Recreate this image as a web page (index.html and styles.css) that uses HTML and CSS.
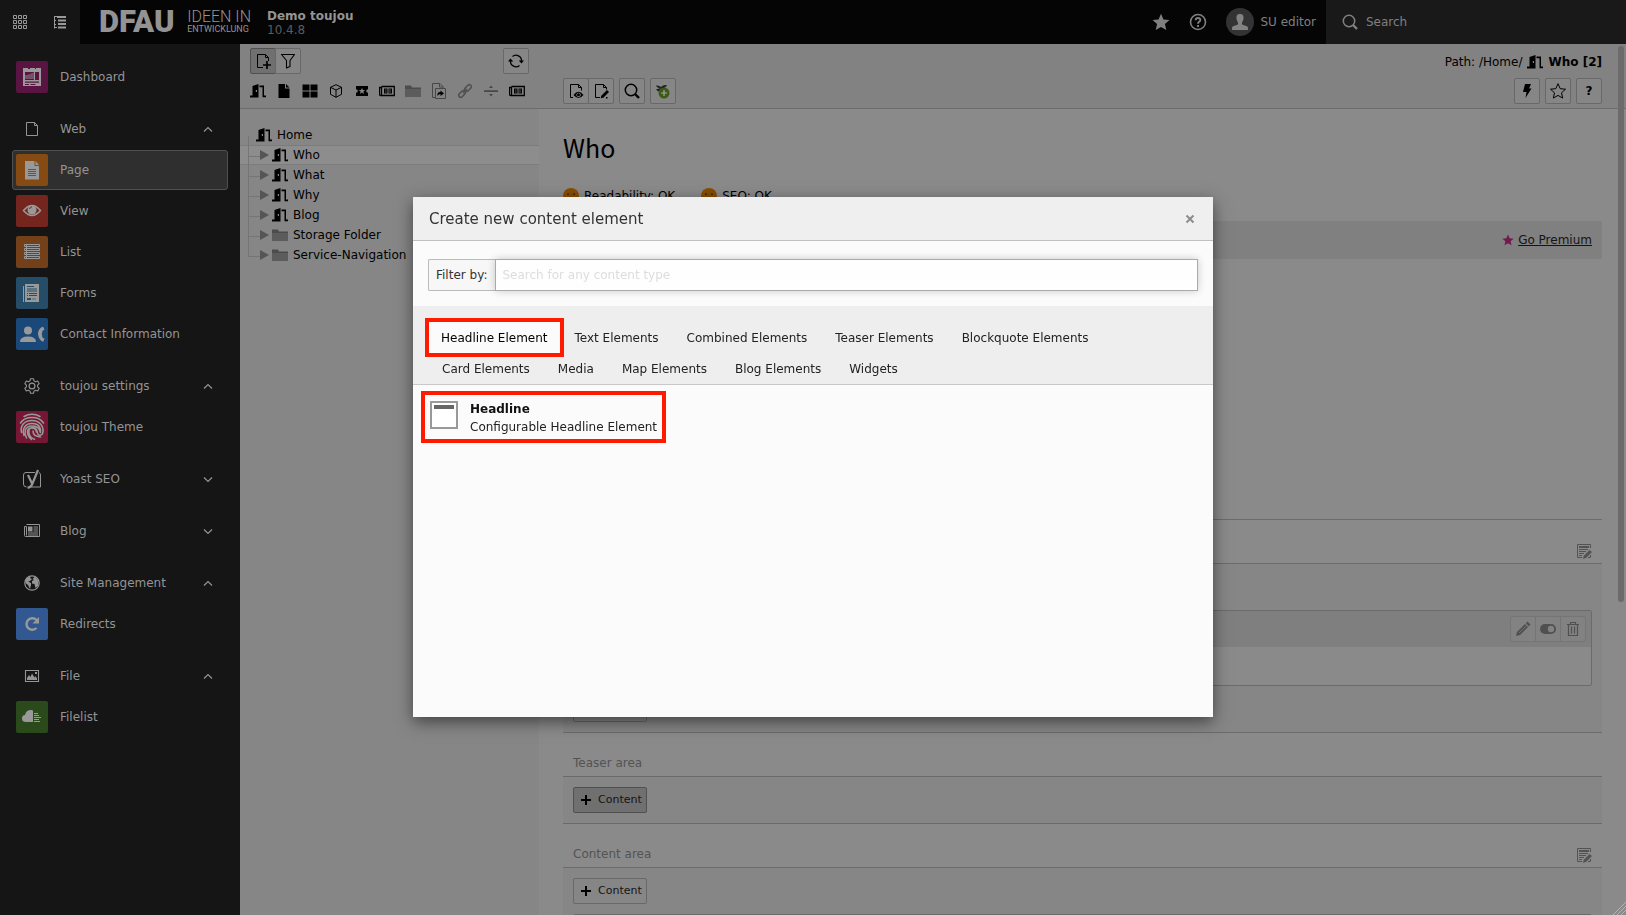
FILE: index.html
```html
<!DOCTYPE html>
<html lang="en">
<head>
<meta charset="utf-8">
<title>Demo toujou</title>
<link rel="stylesheet" href="styles.css">
</head>
<body>
<svg class="defs" aria-hidden="true">
  <symbol id="door" viewBox="0 0 16 16"><path fill="currentColor" d="M0 12.500h2.500V3l6-2v13.500H0zM9.500 2.500H14v10h2v1.800h-3.500V4.200h-3z"/><rect x="5.800" y="7" width="1.200" height="2" fill="#858585"/></symbol>
  <symbol id="page" viewBox="0 0 16 16"><path fill="currentColor" d="M2.500 1H9v4.500h4.500V15h-11zM10 1l3.500 3.500H10z"/></symbol>
  <symbol id="pageline" viewBox="0 0 16 16"><path fill="none" stroke="currentColor" d="M2.500 1.500h8l3 3v10h-11zM10.500 1.500v3h3"/></symbol>
  <symbol id="grid4" viewBox="0 0 16 16"><path fill="currentColor" d="M.5 1.500h7v6h-7zM8.500 1.500h7v6h-7zM.5 8.500h7v6h-7zM8.500 8.500h7v6h-7z"/></symbol>
  <symbol id="cube" viewBox="0 0 16 16"><path fill="none" stroke="currentColor" stroke-linejoin="round" d="M8 1.700l5.500 2.600v7L8 14.300l-5.500-3v-7zM2.500 4.300L8 7l5.500-2.700M8 7v7.300"/></symbol>
  <symbol id="ticket" viewBox="0 0 16 16"><path fill="currentColor" d="M2 3h12v3.200a1.800 1.800 0 0 0 0 3.600V13H2V9.800a1.800 1.800 0 0 0 0-3.600z"/><path fill="#858585" d="M8 4.800L8.900 7h2.300L9.400 8.500l.7 2.400L8 9.600l-2.100 1.300.7-2.400L4.800 7h2.300z"/></symbol>
  <symbol id="news" viewBox="0 0 16 16"><path fill="none" stroke="currentColor" stroke-width="1.300" d="M2.500 3.500h12.800v9H1.500q-1 0-1-1v-7h2v8"/><path fill="currentColor" d="M5 5.500h3.500v5H5zM9.500 5.500H13v5H9.500z"/><path stroke="#828282" stroke-width=".7" d="M6 7h1.500M6 9h1.500M11 6v4"/></symbol>
  <symbol id="folder" viewBox="0 0 16 16"><path fill="#4c4c4c" d="M0 2.500h6l1 2h9V7H0z"/><path fill="#5c5c5c" d="M0 6h16v8H0z"/></symbol>
  <symbol id="shortcut" viewBox="0 0 16 16"><path fill="none" stroke="#484848" d="M4.500 14.500h-3V.5H9l3 3v2M8.500.5v3.500H12M4.500 5.500h10v10h-10z"/><path fill="#000" d="M6.500 13v-2q0-2 3-2V7.500l3.500 3-3.500 2.500v-2q-2 0-3 2z"/></symbol>
  <symbol id="link" viewBox="0 0 16 16"><g fill="none" stroke="#505050" stroke-width="1.500"><rect x="-3.800" y="-2" width="7.600" height="4" rx="2" transform="translate(11 5) rotate(-45)"/><rect x="-3.800" y="-2" width="7.600" height="4" rx="2" transform="translate(5 11) rotate(-45)"/><path d="M6 10l4-4"/></g></symbol>
  <symbol id="divider" viewBox="0 0 16 16"><path fill="#484848" d="M1 7.300h14v1.600H1zM8 2.500L10 5H6zM8 13.500L10 11H6z"/></symbol>
  <symbol id="newpage" viewBox="0 0 16 16"><path fill="none" stroke="currentColor" d="M8 14.500H2.500v-13h8l3 3V8M10.500 1.500v3h3"/><path stroke="currentColor" stroke-width="1.700" d="M12 8v8M8 12h8"/></symbol>
  <symbol id="funnel" viewBox="0 0 16 16"><path fill="none" stroke="currentColor" stroke-width="1.100" stroke-linejoin="round" d="M1.500 1.500h13L10 7.500v6L6.500 15V7.500z"/></symbol>
  <symbol id="refresh" viewBox="0 0 16 16"><path fill="none" stroke="currentColor" stroke-width="1.300" d="M4.500 3.500A5.500 5.500 0 0 1 13.500 8M11.500 12.500A5.500 5.500 0 0 1 2.500 8"/><path fill="currentColor" d="M10.700 7.500H16L13.500 10.500zM0 8.500L2.500 5.500 5.300 8.500z"/></symbol>
  <symbol id="viewpage" viewBox="0 0 16 16"><path fill="none" stroke="currentColor" d="M5 14.500H2.500v-13h8l3 3v3M10.500 1.500v3h3"/><path fill="currentColor" fill-rule="evenodd" d="M5.500 12q5-6.500 10 0-5 6-10 0zM10.500 9.800a2.200 2.200 0 1 0 .1 0z"/><circle cx="10.500" cy="11.700" r="1.500" fill="currentColor"/></symbol>
  <symbol id="editpage" viewBox="0 0 16 16"><path fill="none" stroke="currentColor" d="M7 14.500H2.500v-13h8l3 3v2M10.500 1.500v3h3"/><path fill="currentColor" d="M14 7l2 2-5.700 5.700-2.600.6.600-2.600z"/><path fill="currentColor" d="M13 14h1.500v1.500h-1.500z"/></symbol>
  <symbol id="search" viewBox="0 0 16 16"><circle cx="7" cy="7" r="5.700" fill="none" stroke="currentColor" stroke-width="1.500"/><path stroke="currentColor" stroke-width="2.400" d="M11 11l4 4"/></symbol>
  <symbol id="plantadd" viewBox="0 0 16 16"><path fill="#222" d="M1 2.500q3-.5 5 1.500Q8 1.500 12 2q-1 3-4 3.500v3H6Q2 9 1 6.500 4 5 6 5.500 2 5 1 2.500z"/><circle cx="9" cy="10" r="5.500" fill="#3c5a18"/><path stroke="#a5a5a5" stroke-width="1.200" d="M9 7v6M6 10h6"/></symbol>
  <symbol id="bolt" viewBox="0 0 16 16"><path fill="currentColor" d="M6 1h6L10 5.500h2.500L6.500 15 7.500 9H4z"/></symbol>
  <symbol id="star" viewBox="0 0 16 16"><path d="M8 .7l2.200 5 5.300.5-4 3.600 1.200 5.300L8 12.400l-4.700 2.700 1.200-5.300-4-3.600 5.300-.5z"/></symbol>
  <symbol id="apps" viewBox="0 0 16 16"><path fill="none" stroke="currentColor" d="M1.500 1.500h3v3h-3zM6.500 1.500h3v3h-3zM11.500 1.500h3v3h-3zM1.500 6.500h3v3h-3zM6.500 6.500h3v3h-3zM11.500 6.500h3v3h-3zM1.500 11.500h3v3h-3zM6.500 11.500h3v3h-3zM11.500 11.500h3v3h-3z"/></symbol>
  <symbol id="treeicon" viewBox="0 0 16 16"><path fill="none" stroke="currentColor" d="M2.500 2v12.500M2 2.500h3M2 6.500h2M2 10.500h2M2 13.500h3"/><path fill="currentColor" d="M5 2h9v2H5zM6 5.500h8v2H6zM6 9h8v2H6zM6 12.500h8v2H6z"/></symbol>
  <symbol id="up" viewBox="0 0 16 16"><path fill="none" stroke="currentColor" stroke-width="1.200" d="M4 10.500L8 6.500l4 4"/></symbol>
  <symbol id="down" viewBox="0 0 16 16"><path fill="none" stroke="currentColor" stroke-width="1.200" d="M4 6.500L8 10.500l4-4"/></symbol>
  <symbol id="gear" viewBox="0 0 16 16"><path fill="none" stroke="currentColor" stroke-width="1.100" stroke-linejoin="round" d="M6.500.700h3l.5 2.200 1.500.9 2.200-.7 1.500 2.600L13.600 7.200v1.600l1.600 1.500-1.500 2.600-2.200-.7-1.500.9-.5 2.200h-3L6 13.100l-1.500-.9-2.200.7-1.500-2.600 1.600-1.500V7.200L.8 5.700l1.500-2.600 2.200.7L6 2.900z"/><circle cx="8" cy="8" r="2.900" fill="none" stroke="currentColor" stroke-width="1.200"/></symbol>
  <symbol id="yoast" viewBox="0 0 20 20"><path fill="none" stroke="currentColor" d="M13 3.500H4Q1.500 3.500 1.500 6v9q0 3 3 3M17 3.500q1.500.5 1.500 2.500v12H9"/><path fill="none" stroke="currentColor" stroke-width="2.200" d="M6 6l4 8.500M16 1L10.500 14.500Q9 18.500 5.500 18.700"/></symbol>
  <symbol id="blog" viewBox="0 0 16 16"><path fill="none" stroke="currentColor" d="M2.500 1.500h13v12h-14q-1 0-1-1v-9h2v9"/><path fill="currentColor" d="M4 3.500h4.500v5H4z"/><path stroke="currentColor" d="M9.500 4h4.500M9.500 6h4.500M9.500 8h4.500M4 10h10M4 12h10"/></symbol>
  <symbol id="globe" viewBox="0 0 16 16"><circle cx="8" cy="8" r="7.200" fill="none" stroke="currentColor" stroke-width="1.200"/><path fill="currentColor" d="M2 3.500L7 1l-1 2 2 1-2 2-2 .5 3 1.500v2L6 14 4 10 1.500 8zM8.500 4L11 1.500l3.500 4L14 11l-2.500 2-1-4L8 8.500V6l2-1z"/></symbol>
  <symbol id="image" viewBox="0 0 16 16"><path fill="none" stroke="currentColor" stroke-width="1.100" d="M1.500 2.500h13v11h-13z"/><path fill="currentColor" d="M3 12V10l2-3 1.500 2L8 5.500l2.500 4L11.500 8 13 10.500V12zM11 4h2v2h-2z"/></symbol>
  <symbol id="notes" viewBox="0 0 16 16"><path fill="none" stroke="currentColor" d="M6 14.500H1.500v-13h13V5M14.500 12v2.500H12"/><path fill="currentColor" d="M3 3h10v2H3zM13.500 7L16 9l-6 6-3 .7.600-2.700z"/><path stroke="currentColor" d="M3 6.500h9M3 8.500h7M3 10.500h5M3 12.500h3"/></symbol>
  <symbol id="pencil" viewBox="0 0 16 16"><path fill="currentColor" d="M12.500.500l3 3-1.700 1.700-3-3zM10 3l3 3-8 8-4 1 1-4z"/><path stroke="#808080" d="M4 12l7-7" stroke-width=".7"/></symbol>
  <symbol id="toggle" viewBox="0 0 16 16"><rect y="3" width="16" height="10" rx="5" fill="currentColor"/><circle cx="11" cy="8" r="3.200" fill="#828282"/></symbol>
  <symbol id="trash" viewBox="0 0 16 16"><path fill="none" stroke="currentColor" stroke-width="1.200" d="M2 3.500h12M5.500 3V1.500h5V3M3.500 4v10.500h9V4M6.500 5.500v7M9.500 5.500v7"/></symbol>
  <symbol id="smile" viewBox="0 0 16 16"><circle cx="8" cy="8" r="8" fill="#874d00"/><path fill="none" stroke="#1a0f00" stroke-width="1.200" d="M5 5.500v1.500M11 5.500v1.500M4 10q4 3.500 8 0"/></symbol>
</svg>

<div class="app">
  <header class="topbar">
    <div class="toggles">
      <button type="button" class="plain" aria-label="Toggle modules"><svg class="i16"><use href="#apps"/></svg></button>
      <button type="button" class="plain" aria-label="Toggle page tree"><svg class="i16"><use href="#treeicon"/></svg></button>
    </div>
    <a href="#" class="logo"><span class="logo-main">DFAU</span><span class="logo-claim"><span class="claim-top">IDEEN IN</span><span class="claim-bottom">ENTWICKLUNG</span></span></a>
    <div class="site"><strong>Demo toujou</strong><span>10.4.8</span></div>
    <nav class="user-tools" aria-label="User tools">
      <button type="button" class="plain" aria-label="Bookmarks"><svg class="i18" fill="currentColor"><use href="#star"/></svg></button>
      <button type="button" class="plain" aria-label="Help"><svg class="i18" viewBox="0 0 18 18"><circle cx="9" cy="9" r="7.500" fill="none" stroke="currentColor" stroke-width="1.600"/><path fill="none" stroke="currentColor" stroke-width="1.900" d="M6.700 7.200q0-2.200 2.300-2.200t2.300 2q0 1.200-1.200 1.800T9 10.800M9 12v2"/></svg></button>
      <button type="button" class="plain user"><svg class="avatar" viewBox="0 0 28 28"><circle cx="14" cy="14" r="14" fill="#333"/><path fill="#828282" d="M14 6c3 0 3.800 2 3.500 4.500-.2 2-1 3-1.500 4v2l5 1.800c1 .5 1 2 1 3.700H6c0-1.700 0-3.200 1-3.700l5-1.800v-2c-.5-1-1.300-2-1.500-4C10.200 8 11 6 14 6z"/></svg>SU editor</button>
    </nav>
    <label class="global-search"><svg class="i16"><use href="#search"/></svg><input type="search" placeholder="Search" aria-label="Search"></label>
  </header>

  <nav class="modules" aria-label="Modules">
    <section>
      <a href="#" class="mod"><svg class="mi" viewBox="0 0 32 32"><rect width="32" height="32" rx="2" fill="#5a1441"/><path fill="#999" fill-rule="evenodd" d="M7 7h5v1h2V7h5v1h1V7h5v18H7zM9 11v8h9v-8zM19 11v8h4v-8zM9 20.500v1.200h14v-1.200zM9 23v1h4v-1zM14.500 23v1h5v-1z"/><path fill="#999" d="M9 14h2l3-1 4-1.500V18H9z" opacity=".45"/></svg>Dashboard</a>
    </section>
    <section>
      <button type="button" class="mod head"><svg class="gi"><use href="#pageline"/></svg>Web<svg class="i16 chev"><use href="#up"/></svg></button>
      <a href="#" class="mod active"><svg class="mi" viewBox="0 0 32 32"><rect width="32" height="32" rx="2" fill="#854b12"/><path fill="#999" d="M9 7h9.500v5H23v13.500H9zM19.500 7L23 11h-3.500z"/><path stroke="#854b12" d="M12 15.500h8M12 17.500h8M12 19.500h8M12 21.500h8"/></svg>Page</a>
      <a href="#" class="mod"><svg class="mi" viewBox="0 0 32 32"><rect width="32" height="32" rx="2" fill="#74261e"/><path fill="none" stroke="#999" stroke-width="1.500" d="M7.500 15.500q8.500-10 17 0-8.500 10-17 0z"/><circle cx="16" cy="15" r="4.500" fill="#999"/><path fill="none" stroke="#74261e" d="M13.500 14q.5-2 2.500-2.200"/></svg>View</a>
      <a href="#" class="mod"><svg class="mi" viewBox="0 0 32 32"><rect width="32" height="32" rx="2" fill="#73401a"/><path fill="none" stroke="#999" d="M8.500 8.500h15v2h-15zM8.500 12.500h15v2h-15zM8.500 16.500h15v2h-15zM8.500 20.500h15v2h-15zM10.500 8.500v14"/></svg>List</a>
      <a href="#" class="mod"><svg class="mi" viewBox="0 0 32 32"><rect width="32" height="32" rx="2" fill="#264d68"/><path fill="#999" d="M9 7h14v18H9zM7 9h1v16H7z"/><path stroke="#264d68" d="M11 9.500h7M11 16.500h1M13 16.500h8M11 18.500h1M13 18.500h8"/><path fill="#5d7382" d="M11 11h10v4H11z"/><path fill="#264d68" d="M11 21h4v2h-4z"/><path fill="#71838f" d="M16 21h4v2h-4z"/></svg>Forms</a>
      <a href="#" class="mod"><svg class="mi" viewBox="0 0 32 32"><rect width="32" height="32" rx="2" fill="#1a4878"/><circle cx="12" cy="12.500" r="4" fill="#999"/><path fill="#999" d="M4 24q0-5.500 8-5.500t8 5.500zM27 8.500l1.500 3-2 1.200q-1.500 3.300 0 7l2 .8-1.200 3.200q-4.300-1-5.300-7.500 0-5.500 5-7.700z"/></svg>Contact Information</a>
    </section>
    <section>
      <button type="button" class="mod head"><svg class="gi"><use href="#gear"/></svg>toujou settings<svg class="i16 chev"><use href="#up"/></svg></button>
      <a href="#" class="mod"><svg class="mi" viewBox="0 0 32 32"><rect width="32" height="32" rx="2" fill="#751734"/><g fill="none" stroke="#999" stroke-width="1.500" stroke-linecap="round"><path d="M8 5.500q8-4.500 16 0M4.500 12Q8 6.500 16 6.500T27.500 12M5.500 21.500C4 15 8 9.500 16 9.500s11.500 6 11 11-5 4.500-5.500 1.500c-.5-3.500-2-5.500-5-5.500s-4 2.500-3.500 5.500 3 5.500 5.500 6.200M8 24.500c-2-6 .5-12 8-12s9 5 8.500 9M10.500 27C8 22.500 8 15 16 15s8 6 8 6M15.500 28.500c-2.500-2-4-4.500-4-7.500 0-5 8-5.500 9 0M17 20q0 5.500 7.500 6"/></g></svg>toujou Theme</a>
    </section>
    <section><button type="button" class="mod head"><svg class="gi big"><use href="#yoast"/></svg>Yoast SEO<svg class="i16 chev"><use href="#down"/></svg></button></section>
    <section><button type="button" class="mod head"><svg class="gi"><use href="#blog"/></svg>Blog<svg class="i16 chev"><use href="#down"/></svg></button></section>
    <section>
      <button type="button" class="mod head"><svg class="gi"><use href="#globe"/></svg>Site Management<svg class="i16 chev"><use href="#up"/></svg></button>
      <a href="#" class="mod"><svg class="mi" viewBox="0 0 32 32"><rect width="32" height="32" rx="2" fill="#315891"/><path fill="none" stroke="#999" stroke-width="2.400" d="M20.500 12A5.800 5.800 0 1 0 20.500 20"/><path fill="#999" d="M23 9v6.500h-6.500z"/></svg>Redirects</a>
    </section>
    <section>
      <button type="button" class="mod head"><svg class="gi"><use href="#image"/></svg>File<svg class="i16 chev"><use href="#up"/></svg></button>
      <a href="#" class="mod"><svg class="mi" viewBox="0 0 32 32"><rect width="32" height="32" rx="2" fill="#2b4a1b"/><path fill="#999" d="M17 21h-7q-4 0-4-3.500T9 14q1-5 6-5 1 0 2 .5z"/><path stroke="#999" d="M18 12.500h4M18 14.500h5M18 16.500h7M18 18.500h5M18 20.500h6"/></svg>Filelist</a>
    </section>
  </nav>

  <aside class="tree-panel">
    <div class="bar tree-bar">
      <div class="row">
        <div class="group"><button type="button" class="btn pressed" aria-label="New page"><svg class="i16"><use href="#newpage"/></svg></button><button type="button" class="btn" aria-label="Filter"><svg class="i16"><use href="#funnel"/></svg></button></div>
        <button type="button" class="btn" aria-label="Refresh"><svg class="i16"><use href="#refresh"/></svg></button>
      </div>
      <div class="types">
        <svg class="i16"><use href="#door"/></svg><svg class="i16"><use href="#page"/></svg><svg class="i16"><use href="#grid4"/></svg><svg class="i16"><use href="#cube"/></svg><svg class="i16"><use href="#ticket"/></svg><svg class="i16"><use href="#news"/></svg><svg class="i16"><use href="#folder"/></svg><svg class="i16"><use href="#shortcut"/></svg><svg class="i16"><use href="#link"/></svg><svg class="i16"><use href="#divider"/></svg><svg class="i16"><use href="#news"/></svg>
      </div>
    </div>
    <ul class="tree">
      <li class="root"><svg class="i16"><use href="#door"/></svg>Home</li>
      <li class="node selected"><i class="arrow"></i><svg class="i16"><use href="#door"/></svg>Who</li>
      <li class="node"><i class="arrow"></i><svg class="i16"><use href="#door"/></svg>What</li>
      <li class="node"><i class="arrow"></i><svg class="i16"><use href="#door"/></svg>Why</li>
      <li class="node"><i class="arrow"></i><svg class="i16"><use href="#door"/></svg>Blog</li>
      <li class="node"><i class="arrow"></i><svg class="i16"><use href="#folder"/></svg>Storage Folder</li>
      <li class="node"><i class="arrow"></i><svg class="i16"><use href="#folder"/></svg>Service-Navigation</li>
    </ul>
  </aside>

  <main class="content">
    <div class="bar doc-bar">
      <div class="path"><span>Path: /Home/</span><svg class="i16"><use href="#door"/></svg><strong>Who [2]</strong></div>
      <div class="row">
        <div class="buttons">
          <div class="group"><button type="button" class="btn" aria-label="View"><svg class="i16"><use href="#viewpage"/></svg></button><button type="button" class="btn" aria-label="Edit"><svg class="i16"><use href="#editpage"/></svg></button></div>
          <button type="button" class="btn" aria-label="Search"><svg class="i16"><use href="#search"/></svg></button>
          <button type="button" class="btn" aria-label="Add"><svg class="i16"><use href="#plantadd"/></svg></button>
        </div>
        <div class="buttons">
          <button type="button" class="btn" aria-label="Clear cache"><svg class="i16"><use href="#bolt"/></svg></button>
          <button type="button" class="btn" aria-label="Bookmark"><svg class="i16" fill="none" stroke="currentColor"><use href="#star"/></svg></button>
          <button type="button" class="btn help">?</button>
        </div>
      </div>
    </div>
    <div class="page">
      <h1>Who</h1>
      <div class="scores"><span><svg class="i16"><use href="#smile"/></svg>Readability: OK</span><span><svg class="i16"><use href="#smile"/></svg>SEO: OK</span></div>
      <div class="premium"><svg class="i12"><use href="#star"/></svg><a href="#">Go Premium</a></div>
      <div class="columns">
        <section>
          <header class="col-title"><span></span><svg class="i16"><use href="#notes"/></svg></header>
          <div class="col-body">
            <button type="button" class="btn add"><svg class="plus" viewBox="0 0 10 10"><path d="M5 0v10M0 5h10"/></svg>Content</button>
            <article class="element">
              <div class="element-head"><div class="group soft"><button type="button" class="btn" aria-label="Edit element"><svg class="i16"><use href="#pencil"/></svg></button><button type="button" class="btn" aria-label="Hide element"><svg class="i16"><use href="#toggle"/></svg></button><button type="button" class="btn" aria-label="Delete element"><svg class="i16"><use href="#trash"/></svg></button></div></div>
              <div class="element-body"></div>
            </article>
            <button type="button" class="btn add"><svg class="plus" viewBox="0 0 10 10"><path d="M5 0v10M0 5h10"/></svg>Content</button>
          </div>
        </section>
        <section>
          <header class="col-title"><span>Teaser area</span></header>
          <div class="col-body"><button type="button" class="btn add pressed"><svg class="plus" viewBox="0 0 10 10"><path d="M5 0v10M0 5h10"/></svg>Content</button></div>
        </section>
        <section>
          <header class="col-title"><span>Content area</span><svg class="i16"><use href="#notes"/></svg></header>
          <div class="col-body"><button type="button" class="btn add"><svg class="plus" viewBox="0 0 10 10"><path d="M5 0v10M0 5h10"/></svg>Content</button>
            <article class="element"><div class="element-head"></div></article></div>
        </section>
      </div>
    </div>
    <div class="thumb"></div>
    <svg class="grip" viewBox="0 0 14 14"><path stroke="#b4b4b4" d="M1 14L14 1M5 14l9-9M9 14l5-5"/></svg>
  </main>
</div>

<div class="overlay">
  <div class="modal" role="dialog" aria-labelledby="modal-title">
    <header class="modal-head"><h2 id="modal-title">Create new content element</h2><button type="button" class="close" aria-label="Close"><svg viewBox="0 0 10 10"><path d="M1.500 1.500l7 7M8.500 1.500l-7 7"/></svg></button></header>
    <div class="filter"><label for="filter">Filter by:</label><input id="filter" type="text" placeholder="Search for any content type"></div>
    <div class="tabs" role="tablist">
      <button type="button" role="tab" aria-selected="true" class="tab current">Headline Element</button><button type="button" role="tab" class="tab">Text Elements</button><button type="button" role="tab" class="tab">Combined Elements</button><button type="button" role="tab" class="tab">Teaser Elements</button><button type="button" role="tab" class="tab">Blockquote Elements</button><span class="break"></span><button type="button" role="tab" class="tab">Card Elements</button><button type="button" role="tab" class="tab">Media</button><button type="button" role="tab" class="tab">Map Elements</button><button type="button" role="tab" class="tab">Blog Elements</button><button type="button" role="tab" class="tab">Widgets</button>
    </div>
    <div class="results">
      <a href="#" class="choice"><svg class="choice-icon" viewBox="0 0 28 28"><path fill="#fff" stroke="#999" stroke-width="2" d="M1 1h26v26H1z"/><path fill="#666" d="M4 4h20v4H4z"/></svg><span><strong>Headline</strong>Configurable Headline Element</span></a>
    </div>
  </div>
</div>
</body>
</html>
```
FILE: styles.css
```css
* { box-sizing: border-box; }
body { margin: 0; height: 100vh; overflow: hidden; font: 12px/18px Verdana, "DejaVu Sans", sans-serif; color: #000; background: #8a8a8a; }
button, input { font: inherit; color: inherit; }
button { cursor: pointer; }
a { color: inherit; text-decoration: none; }
h1, h2, ul { margin: 0; padding: 0; font-weight: normal; list-style: none; }
svg { flex: none; display: block; }
.defs { position: absolute; width: 0; height: 0; }
.i12 { width: 12px; height: 12px; }
.i16 { width: 16px; height: 16px; }
.i18 { width: 18px; height: 18px; }
.plain { border: 0; padding: 0; background: none; display: flex; align-items: center; }

.app { display: grid; grid-template: 44px 1fr / 240px 299px 1fr; height: 100vh; }
.topbar { grid-column: 1 / -1; display: flex; align-items: center; background: #050505; color: #808080; }
.toggles { display: flex; width: 80px; height: 100%; background: #151515; color: #999; }
.toggles .plain { flex: 1; justify-content: center; }
.logo { display: flex; align-items: center; justify-content: space-between; width: 152px; margin: 0 16px 0 19px; color: #939393; font-family: Roboto, sans-serif; }
.logo-main { font-size: 31px; line-height: 34px; font-weight: 900; }
.logo-claim { display: flex; flex-direction: column; white-space: nowrap; }
.claim-top { font-size: 16px; line-height: 15px; font-weight: 300; }
.claim-bottom { font-size: 9px; line-height: 11px; }
.site { display: flex; flex-direction: column; padding-top: 2px; line-height: 14px; }
.site strong { color: #949494; }
.site span { color: #5c5c5c; }
.user-tools { display: flex; align-items: center; gap: 19px; margin-left: auto; padding-right: 10px; }
.user { gap: 6px; }
.avatar { width: 28px; height: 28px; }
.global-search { display: flex; align-items: center; gap: 8px; width: 300px; height: 100%; padding-left: 16px; background: #191919; }
.global-search input { flex: 1; min-width: 0; border: 0; padding: 0; background: none; outline: 0; }
.global-search input::placeholder { color: #808080; opacity: 1; }

.modules { display: flex; flex-direction: column; gap: 12px; padding: 13px 12px; background: #151515; color: #949494; overflow: hidden; }
.modules section { display: flex; flex-direction: column; gap: 1px; }
.mod { display: flex; align-items: center; gap: 12px; width: 100%; height: 40px; padding: 0 11px 0 3px; border: 1px solid transparent; border-radius: 3px; background: none; text-align: left; line-height: 20px; }
.mod.active { background: #2f2f2f; border-color: #505050; }
.mi { width: 32px; height: 32px; }
.gi { width: 16px; height: 16px; margin: 0 8px; }
.gi.big { width: 20px; height: 20px; margin: 0 6px; }
.chev { margin-left: auto; }

.bar { height: 65px; border-bottom: 1px solid #6c6c6c; background: #828282; }
.row { display: flex; justify-content: space-between; }
.group, .buttons { display: flex; }
.buttons { gap: 5px; }
.btn { display: flex; align-items: center; justify-content: center; width: 26px; height: 26px; padding: 0; border: 1px solid #686868; border-radius: 2px; background: #868686; }
.group .btn + .btn { margin-left: -1px; border-radius: 0 2px 2px 0; }
.btn.pressed { background: #707070; border-color: #505050; }
.help { font-weight: bold; }

.tree-panel { background: #868686; overflow: hidden; }
.tree-bar { padding: 4px 10px; }
.types { display: flex; justify-content: space-between; padding: 9px 4px 0 0; }
.tree { padding-top: 16px; }
.tree li { display: flex; align-items: center; height: 20px; gap: 5px; }
.root { padding-left: 16px; }
.node { position: relative; padding-left: 20px; border: 1px solid transparent; border-width: 1px 0; }
.node::before { content: ""; position: absolute; left: 8px; top: -10px; width: 11px; height: 20px; border: 1px solid #757575; border-width: 0 0 1px 1px; }
.tree .selected { background: #8d8d8d; border-color: #7c7c7c; }
.arrow { border-left: 9px solid #555; border-top: 5px solid transparent; border-bottom: 5px solid transparent; margin-right: -2px; }

.content { position: relative; overflow: hidden; }
.doc-bar { padding: 9px 24px 0; }
.path { display: flex; justify-content: flex-end; align-items: center; gap: 5px; height: 18px; margin-bottom: 7px; }
.page { padding: 20px 24px 0; }
h1 { font: 25px/36px "Noto Sans CJK SC", "Noto Sans", sans-serif; }
.scores { display: flex; gap: 26px; margin-top: 22px; }
.scores span { display: flex; align-items: center; gap: 5px; }
.premium { display: flex; justify-content: flex-end; align-items: center; gap: 4px; height: 38px; margin-top: 16px; padding-right: 10px; background: #808080; }
.premium svg { fill: #701b4c; }
.premium a { text-decoration: underline; color: #151515; }
.columns { margin-top: 260px; }
.col-title { display: flex; justify-content: space-between; align-items: flex-end; height: 45px; padding: 0 10px 4px; border: 1px solid #6b6b6b; border-width: 1px 0; color: #535353; }
.col-body { display: flex; flex-direction: column; align-items: flex-start; gap: 10px; padding: 10px; background: #868686; }
.add { width: auto; gap: 7px; padding: 0 4px 0 7px; font-size: 11px; line-height: 24px; color: #151515; }
.plus { width: 10px; height: 10px; stroke: #000; stroke-width: 2; }
.element { width: 100%; border: 1px solid #6b6b6b; border-radius: 2px; background: #8a8a8a; }
.element-head { display: flex; justify-content: flex-end; height: 36px; padding: 5px 5px; background: #7f7f7f; }
.element-body { height: 38px; }
.soft .btn { border-color: #757575; background: #828282; color: #505050; }
.thumb { position: absolute; top: 2px; right: 2px; width: 6px; height: 556px; border-radius: 3px; background: #6b6b6b; }
.grip { position: absolute; right: 0; bottom: 0; width: 14px; height: 14px; }

.overlay { position: fixed; inset: 0; display: flex; align-items: center; justify-content: center; padding-bottom: 1px; }
.modal { width: 800px; max-width: 96vw; min-height: 520px; background: #fbfbfb; box-shadow: 0 5px 15px rgba(0, 0, 0, .5); }
.modal-head { display: flex; align-items: center; justify-content: space-between; height: 44px; padding: 0 18px 0 16px; border-bottom: 1px solid #c0c0c0; background: #efefef; }
h2 { font-size: 15px; color: #333; }
.close { display: flex; padding: 0; border: 0; background: none; }
.close svg { width: 10px; height: 10px; fill: none; stroke: #8c8c8c; stroke-width: 2; }
.filter { display: flex; padding: 18px 15px 15px; }
.filter label { height: 32px; padding: 6px 8px 6px 7px; border: 1px solid #bbb; border-right: 0; border-radius: 2px 0 0 2px; background: #f7f7f7; color: #333; }
.filter input { flex: 1; min-width: 0; height: 32px; padding: 0 6px; border: 1px solid #aaa; background: #fefefe; outline: 0; box-shadow: 0 0 8px rgba(0, 0, 0, .2); }
.filter input::placeholder { color: #ddd; opacity: 1; }
.tabs { display: flex; flex-wrap: wrap; padding: 16px 15px 0; border-bottom: 1px solid #c8c8c8; background: #eee; }
.tab { height: 31px; padding: 0 14px; border: 0; background: none; color: #222; }
.tab.current { margin: 0 1px; padding: 0 12px; background: #fbfbfb; color: #000; box-shadow: 0 0 0 4px #ff1a00; }
.break { flex-basis: 100%; }
.results { padding: 6px 8px; }
.choice { display: inline-flex; align-items: flex-start; gap: 12px; padding: 5px 5px 3px; border: 4px solid #ff1a00; color: #222; }
.choice-icon { width: 28px; height: 28px; margin-top: 1px; }
.choice strong { display: block; color: #111; }
```
